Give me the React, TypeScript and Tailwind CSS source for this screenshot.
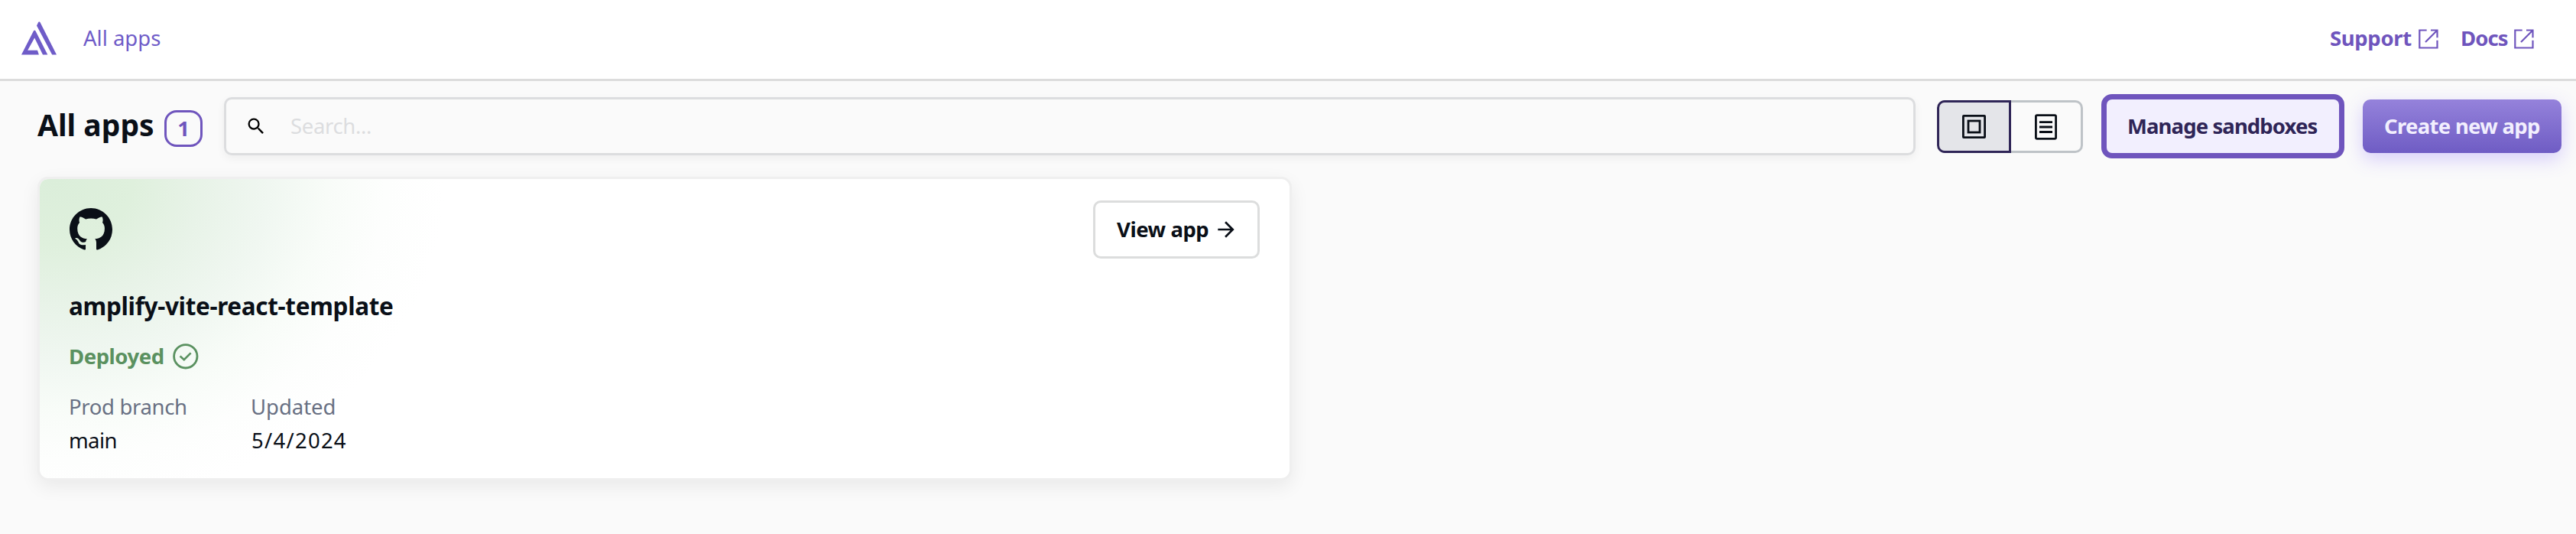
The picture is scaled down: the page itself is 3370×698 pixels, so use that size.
import React from "react";

function AmplifyLogo() {
  return (
    <svg width="46" height="44" viewBox="0 0 46 44" fill="#6f5cc8">
      <path d="M16 12.2L17.2 11.4L18.4 12.2L34.3 43.4H28L17.2 21.4L8.2 37.8H21L22.9 43.4H0Z" />
      <path d="M22.2 0.9L23.2 0.2L24.4 0.9L46 43.4H40.2L20 5.4Z" />
    </svg>
  );
}

function ExternalIcon() {
  return (
    <svg className="mt-[2px]" width="26" height="26" viewBox="0 0 26 26" fill="none" stroke="#6f55bd" strokeWidth="2.2">
      <path d="M10.7 1.5H1.3V24.5H24.5V14.8M16 1.5H24.5V11.3M24 2L9 17" />
    </svg>
  );
}

function GithubMark() {
  return (
    <svg className="ml-px" width="56" height="56" viewBox="0 0 16 16" fill="#0a0f17">
      <path d="M8 0C3.58 0 0 3.58 0 8c0 3.54 2.29 6.53 5.47 7.59.4.07.55-.17.55-.38 0-.19-.01-.82-.01-1.49-2.01.37-2.53-.49-2.69-.94-.09-.23-.48-.94-.82-1.13-.28-.15-.68-.52-.01-.53.63-.01 1.08.58 1.23.82.72 1.21 1.87.87 2.33.66.07-.52.28-.87.51-1.07-1.78-.2-3.64-.89-3.64-3.95 0-.87.31-1.59.82-2.15-.08-.2-.36-1.02.08-2.12 0 0 .67-.21 2.2.82.64-.18 1.32-.27 2-.27s1.36.09 2 .27c1.53-1.04 2.2-.82 2.2-.82.44 1.1.16 1.92.08 2.12.51.56.82 1.27.82 2.15 0 3.07-1.87 3.75-3.65 3.95.29.25.54.73.54 1.48 0 1.07-.01 1.93-.01 2.2 0 .21.15.46.55.38A8.01 8.01 0 0 0 16 8c0-4.42-3.58-8-8-8z" />
    </svg>
  );
}

function SearchIcon() {
  return (
    <svg width="28" height="28" viewBox="0 0 24 24" fill="#000">
      <path d="M15.5 14h-.79l-.28-.27A6.47 6.47 0 0 0 16 9.5 6.5 6.5 0 1 0 9.5 16c1.61 0 3.09-.59 4.23-1.57l.27.28v.79l5 4.99L20.49 19l-4.99-5zm-6 0C7.01 14 5 11.99 5 9.5S7.01 5 9.5 5 14 7.01 14 9.5 11.99 14 9.5 14z" />
    </svg>
  );
}

function GridIcon() {
  return (
    <svg width="31" height="31" viewBox="0 0 31 31" fill="none" stroke="#0a0f17" strokeWidth="2.8">
      <rect x="1.4" y="1.4" width="28.2" height="28.2" rx="0.6" />
      <rect x="8" y="8" width="15" height="15" />
    </svg>
  );
}

function ListIcon() {
  return (
    <svg width="29" height="34" viewBox="0 0 29 34" fill="none" stroke="#0a0f17" strokeWidth="2.8">
      <rect x="1.4" y="1.7" width="26.2" height="30.6" rx="1.6" />
      <path d="M6 10.6H23M6 17H23M6 23.5H23" />
    </svg>
  );
}

function ArrowIcon() {
  return (
    <svg width="32" height="32" viewBox="0 0 24 24" fill="#0a0f17">
      <path d="M12 4l-1.41 1.41L16.17 11H4v2h12.17l-5.58 5.59L12 20l8-8z" />
    </svg>
  );
}

function CheckCircle() {
  return (
    <svg width="34" height="34" viewBox="0 0 34 34" fill="none" stroke="#5a9160" strokeWidth="2.8">
      <circle cx="16.8" cy="16.8" r="15.2" />
      <path d="M9.6 16.6L14.8 21.2L23.6 12.4" strokeWidth="2.7" />
    </svg>
  );
}

export default function App() {
  return (
    <div className="flex h-[698px] w-[3370px] flex-col overflow-hidden bg-[#fafafa] font-['Noto_Sans','Open_Sans',sans-serif] text-[27.5px] leading-[36px] text-[#0a0f17]">
      <header className="flex h-[106px] shrink-0 items-center justify-between border-b-3 border-[#dcdcdc] bg-white pr-[55px] pb-1 pl-7">
        <div className="flex items-center gap-[35px]">
          <AmplifyLogo />
          <a className="text-[#6f5cc8]">All apps</a>
        </div>
        <nav className="flex items-center gap-[29px] font-bold text-[#6f55bd]">
          <a className="flex w-[142px] items-center justify-between tracking-[-0.35px]">
            Support
            <ExternalIcon />
          </a>
          <a className="flex w-[96px] items-center justify-between tracking-[-0.9px]">
            Docs
            <ExternalIcon />
          </a>
        </nav>
      </header>

      <main className="flex flex-col pt-[17px] pr-[19px] pl-[49px]">
        <div className="flex h-[84px] items-center">
          <h1 className="w-[166px] pb-[4px] text-[39px] leading-[48px] font-bold whitespace-nowrap">
            All apps
          </h1>
          <span className="mt-[6px] flex h-12 w-[50px] items-center justify-center rounded-[16px] border-3 border-[#6f55bd] pb-px font-bold text-[#6f55bd]">
            1
          </span>
          <div className="ml-7 flex h-[76px] flex-1 items-center rounded-[10px] border-3 border-[#dcdddf] pl-[25px] shadow-[0_4px_12px_rgba(0,0,0,0.05)]">
            <SearchIcon />
            <span className="ml-[31px] tracking-[-0.35px] text-[#dcdddf]">Search...</span>
          </div>
          <div className="mt-px ml-7 flex h-[69px] w-[191px]">
            <button className="flex w-[97px] items-center justify-center rounded-l-[10px] border-3 border-[#2f2557] bg-[#e4e5e9]">
              <GridIcon />
            </button>
            <button className="flex flex-1 items-center justify-center rounded-r-[10px] border-3 border-l-0 border-[#bec3c7]">
              <ListIcon />
            </button>
          </div>
          <button className="ml-6 flex h-[84px] w-[318px] items-center rounded-[14px] border-7 border-[#6f55bd] bg-[#f2effe] pl-[27px] font-bold tracking-[-0.9px] whitespace-nowrap text-[#2f2557]">
            Manage sandboxes
          </button>
          <button className="ml-6 flex h-[70px] w-[260px] items-center rounded-[10px] bg-linear-to-b from-[#9582db] to-[#6f5cc4] pl-7 font-bold tracking-[-0.7px] whitespace-nowrap text-[#f2effe] shadow-[0_8px_24px_rgba(111,77,255,0.25)]">
            Create new app
          </button>
        </div>

        <section className="mt-6 flex h-[397px] w-[1641px] flex-col rounded-[14px] border-3 border-[#efefef] bg-white bg-[radial-gradient(ellipse_510px_430px_at_20px_0px,#dbeeda_0%,#dff0dd_20%,#e8f3e8_38%,#f0f7f1_55%,#f8fcf8_70%,#fdfefd_85%,#ffffff_100%)] bg-clip-padding pt-7 pr-[39px] pl-[38px] shadow-[0_8px_24px_rgba(0,0,0,0.07)]">
          <div className="flex h-[76px] items-center justify-between">
            <GithubMark />
            <button className="flex h-[76px] w-[218px] items-center rounded-[10px] border-3 border-[#dcdddd] bg-white pl-7 font-bold tracking-[-0.45px]">
              <span>View app</span>
              <span className="ml-[7px]">
                <ArrowIcon />
              </span>
            </button>
          </div>
          <h2 className="mt-[42px] text-[31.5px] leading-[40px] font-bold tracking-[-0.33px]">
            amplify-vite-react-template
          </h2>
          <div className="mt-[28px] flex h-9 items-center gap-[11px] font-bold tracking-[-0.45px] text-[#5a9160]">
            Deployed
            <CheckCircle />
          </div>
          <dl className="mt-[30px] grid grid-cols-[238px_1fr] gap-y-2">
            <dt className="tracking-[-0.35px] text-[#687083]">Prod branch</dt>
            <dt className="tracking-[-0.05px] text-[#687083]">Updated</dt>
            <dd className="tracking-[-0.6px]">main</dd>
            <dd className="pl-px tracking-[1.25px]">5/4/2024</dd>
          </dl>
        </section>
      </main>
    </div>
  );
}
